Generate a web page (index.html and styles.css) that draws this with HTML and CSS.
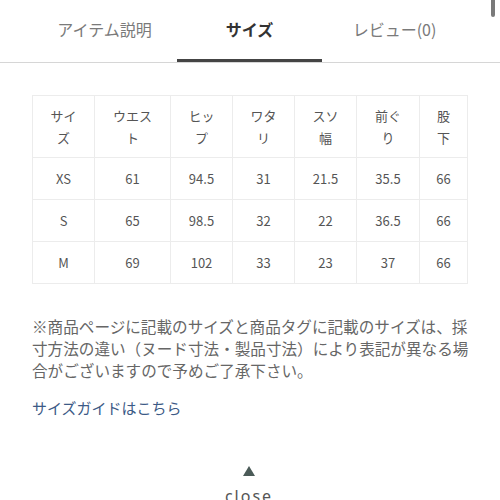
FILE: index.html
```html
<!DOCTYPE html>
<html lang="ja">
<head>
<meta charset="utf-8">
<link rel="stylesheet" href="styles.css">
</head>
<body>
<div class="scrollbar"></div>
<nav class="tabs">
  <div class="tab">アイテム説明</div>
  <div class="tab active">サイズ</div>
  <div class="tab">レビュー(0)</div>
</nav>
<main class="content">
  <table class="size-table">
    <colgroup>
      <col class="c62"><col class="c76"><col class="c62"><col class="c62"><col class="c62"><col class="c63"><col class="c48">
    </colgroup>
    <thead>
      <tr><th>サイ<br>ズ</th><th>ウエス<br>ト</th><th>ヒッ<br>プ</th><th>ワタ<br>リ</th><th>スソ<br>幅</th><th>前ぐ<br>り</th><th>股<br>下</th></tr>
    </thead>
    <tbody>
      <tr><td>XS</td><td>61</td><td>94.5</td><td>31</td><td>21.5</td><td>35.5</td><td>66</td></tr>
      <tr><td>S</td><td>65</td><td>98.5</td><td>32</td><td>22</td><td>36.5</td><td>66</td></tr>
      <tr><td>M</td><td>69</td><td>102</td><td>33</td><td>23</td><td>37</td><td>66</td></tr>
    </tbody>
  </table>
  <p class="note">※商品ページに記載のサイズと商品タグに記載のサイズは、採寸方法の違い（ヌード寸法・製品寸法）により表記が異なる場合がございますので予めご了承下さい。</p>
  <a class="guide" href="#">サイズガイドはこちら</a>
  <div class="close">
    <span class="arrow"></span>
    <span class="close-text">close</span>
  </div>
</main>
</body>
</html>
```
FILE: styles.css
```css
html, body {
  margin: 0;
  padding: 0;
  background: #fff;
}
body {
  font-family: "Noto Sans CJK JP", "Noto Sans", sans-serif;
  color: #555;
  width: 500px;
  height: 500px;
  overflow: hidden;
  position: relative;
}
.scrollbar {
  position: absolute;
  top: 0;
  right: 5px;
  width: 4px;
  height: 17px;
  background: #7a7a7a;
  border-radius: 0 0 2px 2px;
}
.tabs {
  display: flex;
  padding: 0 33px 0 32px;
  border-bottom: 1px solid #d6d6d6;
  height: 62px;
}
.tab {
  flex: 1;
  text-align: center;
  font-size: 16px;
  line-height: 20px;
  padding-top: 19px;
  color: #7a7a7a;
  box-sizing: border-box;
}
.tab.active {
  font-weight: bold;
  color: #333;
  border-bottom: 3px solid #444;
}
.content {
  padding: 32px 33px 0 32px;
}
.size-table {
  width: 435px;
  border-collapse: collapse;
  table-layout: fixed;
  border: 1px solid #ececec;
}
.c62 { width: 62px; }
.c76 { width: 76px; }
.c63 { width: 63px; }
.c48 { width: 48px; }
.size-table th,
.size-table td {
  border: 1px solid #ececec;
  text-align: center;
  font-size: 13px;
  line-height: 22px;
  color: #555;
  font-weight: normal;
  padding: 0;
}
.size-table th {
  height: 61px;
}
.size-table td {
  height: 41px;
}
.note {
  margin: 31px -6px 0 0;
  font-size: 15.6px;
  line-height: 22px;
  color: #666;
}
.guide {
  display: block;
  margin-top: 16px;
  font-size: 15px;
  line-height: 22px;
  color: #3c5a86;
  text-decoration: none;
}
.close {
  display: flex;
  flex-direction: column;
  align-items: center;
  margin-top: 47px;
  padding-right: 1px;
}
.arrow {
  width: 0;
  height: 0;
  border-left: 6px solid transparent;
  border-right: 6px solid transparent;
  border-bottom: 10px solid #4b5b58;
}
.close-text {
  margin-top: 9px;
  font-family: "Noto Sans", sans-serif;
  font-size: 16px;
  line-height: 22px;
  letter-spacing: 2px;
  color: #555;
}
```
